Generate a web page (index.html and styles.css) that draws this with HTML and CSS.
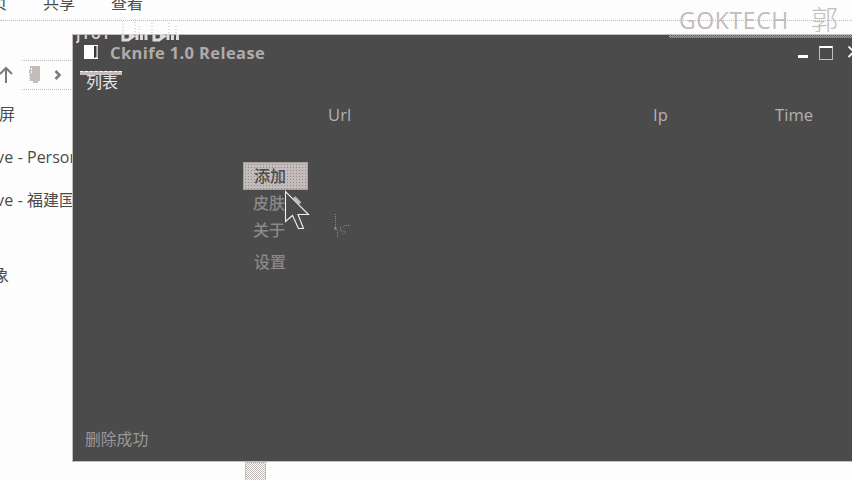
FILE: index.html
```html
<!DOCTYPE html>
<html lang="zh-CN">
<head>
<meta charset="utf-8">
<title>Cknife 1.0 Release</title>
<link rel="stylesheet" href="styles.css">
</head>
<body>
<div class="desktop">
  <section class="explorer">
    <nav class="ribbon"><span class="tab-page">页</span><span class="tab-share">共享</span><span>查看</span></nav>
    <div class="address-row">
      <svg class="up" width="14" height="18" viewBox="0 0 14 18"><path d="M6 17V2M0 8L6 2L12 8" fill="none" stroke="#7b7a7b" stroke-width="2"/></svg>
      <div class="address">
        <svg width="14" height="18" viewBox="0 0 14 18"><path d="M2 0H12V15H10V17H5V15H1V4H2Z" fill="#c4bbbb"/><path d="M3.500 2V7L1.500 8V14L4 15.500" fill="none" stroke="#fdfdfd" stroke-dasharray="2 1"/></svg>
        <svg class="chevron" width="8" height="10" viewBox="0 0 8 10"><path d="M1.500 1L5.500 5L1.500 9" fill="none" stroke="#7b7a7b" stroke-width="2.500"/></svg>
      </div>
    </div>
    <div class="tree">
      <p class="t-screen">屏</p>
      <p class="t-drive"><span>ve -</span>Person</p>
      <p class="t-drive"><span>ve -</span>福建国</p>
      <p class="t-object">象</p>
    </div>
    <div class="scroll-thumb"></div>
  </section>

  <main class="window">
    <div class="title-shade"></div>
    <header class="titlebar">
      <svg class="app-icon" width="15" height="14" viewBox="0 0 15 14"><rect x="0" y="0" width="14" height="14" fill="#fdfdfd"/><path d="M10 1H12.500V12L10 13Z" fill="#39393a"/><path d="M13.500 1V13" stroke="#c4bbbb"/></svg>
      <h1>Cknife 1.0 Release</h1>
      <div class="controls">
        <i class="minimize"></i><i class="maximize"></i>
        <svg width="12" height="12" viewBox="0 0 12 12"><path d="M0.500 0.500L11 11M11 0.500L0.500 11" stroke="#fdfdfd" stroke-width="1.800"/></svg>
      </div>
    </header>
    <div class="tabs"><span>列表</span></div>
    <div class="columns"><span>Url</span><span>Ip</span><span>Time</span></div>
    <div class="content"></div>
    <footer>删除成功</footer>
  </main>

  <ul class="menu"><li class="selected">添加</li><li>皮肤</li><li>关于</li><li class="last">设置</li></ul>
  <svg class="cursor" width="27" height="42" viewBox="0 0 27 42"><path d="M1.500 1.500V31.500L8.500 25.500L14.500 38.500H19.500L14 24.500H24.500Z" fill="#4b4b4c" stroke="#f4f0f0" stroke-width="1.100"/><path d="M10 7.500L16 13.500" stroke="#c4bbbb" stroke-width="3.500"/></svg>
  <svg class="trace" width="18" height="28" viewBox="0 0 18 28"><path d="M2.500 1V15M4.500 17V25M16 12.500H11.500L9.500 14.500M7.500 14V18H12V20L8.500 21.500" fill="none" stroke="#8b8989" stroke-dasharray="1 1"/><path d="M1.500 15.500H3.500" stroke="#a4a0a0" stroke-width="2"/></svg>
  <div class="stamp"><span>jioi</span>
    <svg width="62" height="24" viewBox="0 0 62 24"><path d="M1 1L4 4V17M16 1V17M20 8V17M33 2V17M50 5V17M57 8V17" fill="none" stroke="#c4bbbb" stroke-dasharray="1 2"/><path d="M4 16.500V22H9L14 18.500L10 17M18 16.500V22M22.500 17V22M27 16V22M35 16.500V22H40L45 18.500L41 17M49 16.500V22M53.500 17V22M58.500 16V22" fill="none" stroke="#e0dbdb" stroke-width="3"/></svg>
  </div>
  <div class="watermark"><span>GOKTECH</span><span class="name">郭</span></div>
</div>
</body>
</html>
```
FILE: styles.css
```css
* { box-sizing: border-box; }
body { margin: 0; font: 16px/20px "Open Sans", "Noto Sans CJK SC", sans-serif; color: #4b4b4c; }
h1, p, ul { margin: 0; padding: 0; }
svg { display: block; flex: none; }
.desktop { position: relative; width: 852px; height: 480px; overflow: hidden; background: #fdfdfd; }

.explorer { width: 100%; height: 480px; }
.ribbon { display: flex; height: 21px; border-bottom: 1px dotted #c4bbbb; line-height: 20px; }
.ribbon span { margin-top: -7px; white-space: nowrap; }
.ribbon .tab-page { margin-left: -9px; width: 52px; }
.ribbon .tab-share { width: 68px; }
.address-row { display: flex; height: 30px; margin-top: 39px; }
.up { margin: 6px 8px 0 0; }
.address { display: flex; width: 51px; padding: 5px 0 0 6px; border-top: 1px dotted #c4bbbb; border-bottom: 1px dotted #c4bbbb; }
.chevron { margin: 4px 0 0 12px; }
.tree { width: 100px; white-space: nowrap; padding-top: 14px; }
.tree p { height: 20px; }
.tree .t-screen { margin-left: -1px; margin-bottom: 23px; }
.tree .t-drive { display: flex; margin-left: -4px; margin-bottom: 23px; }
.tree .t-drive span { width: 31px; letter-spacing: 0.2px; }
.tree .t-object { margin: 55px 0 0 -7px; }
.scroll-thumb { width: 21px; height: 20px; margin: 177px 0 0 245px; border: 1px solid #c4bbbb; border-bottom: 0; background: repeating-conic-gradient(#c4bbbb 0 25%, #fdfdfd 0 50%) 0 0 / 2px 2px; }

.window { position: absolute; left: 72px; top: 34px; width: 790px; height: 428px; display: flex; flex-direction: column; background: #4b4b4c; border: 1px solid #c4bbbb; color: #c4bbbb; }
.title-shade { height: 3px; margin-left: 596px; flex: none; background: repeating-conic-gradient(#a5a1a1 0 25%, #626262 0 50%) 0 0 / 2px 2px; }
.titlebar { display: flex; height: 31px; flex: none; }
.app-icon { margin: 7px 0 0 11px; }
h1 { margin: 4px 0 0 11px; font-size: 16.500px; line-height: 22px; font-weight: 700; letter-spacing: 0.38px; color: #b0abab; white-space: nowrap; }
.controls { display: flex; margin: 8px 0 0 auto; width: 63px; flex: none; }
.minimize { width: 10px; height: 3px; margin: 9px 11px 0 0; background: #fdfdfd; flex: none; }
.maximize { width: 14px; height: 14px; margin-right: 15px; border: 1px solid #c4bbbb; border-top: 2px solid #fdfdfd; flex: none; }
.tabs { height: 31px; flex: none; margin-left: 7px; }
.tabs::before { content: ""; display: block; width: 42px; height: 3px; margin-top: 2px; border-top: 1px dashed #fdfdfd; background: #c4bbbb; }
.tabs span { display: block; margin-left: 6px; line-height: 14px; color: #e9e5e5; }
.columns { display: grid; grid-template-columns: 325px 122px 1fr; padding: 5px 0 0 255px; font-size: 16.500px; line-height: 20px; letter-spacing: 0.1px; color: #b5b0b0; }
.content { flex: 1; }
footer { height: 32px; padding-left: 12px; line-height: 20px; font-size: 15.800px; color: #9b9797; }

.menu { position: absolute; left: 243px; top: 162px; width: 65px; list-style: none; color: #8b8989; font-weight: 500; }
.menu li { height: 27.500px; padding-left: 10px; line-height: 27.500px; }
.menu .selected { border: 1px solid #a6a1a1; padding-left: 10px; line-height: 26px; color: #4b4b4c; background: #c4bbbb radial-gradient(#8f8989 0.5px, transparent 0.7px) 0 0 / 3px 3px; }
.menu .last { margin-top: 3px; line-height: 28px; padding-left: 11px; }
.cursor { position: absolute; left: 284px; top: 190px; }
.trace { position: absolute; left: 333px; top: 213px; }
.stamp { position: absolute; left: 76px; top: 18px; display: flex; width: 110px; height: 25px; }
.stamp span { display: flex; align-items: flex-end; width: 43px; height: 8px; margin-top: 17px; overflow: hidden; color: #e0dbdb; font-weight: 600; letter-spacing: 3px; }
.watermark { position: absolute; left: 679px; top: 4px; display: flex; color: #c4bbbb; font: 400 23px/32px "Open Sans", "Noto Sans CJK SC", sans-serif; white-space: nowrap; }
.watermark span:first-child { width: 132px; letter-spacing: 0.6px; }
.watermark .name { font-size: 27px; line-height: 31px; font-weight: 300; }
```
